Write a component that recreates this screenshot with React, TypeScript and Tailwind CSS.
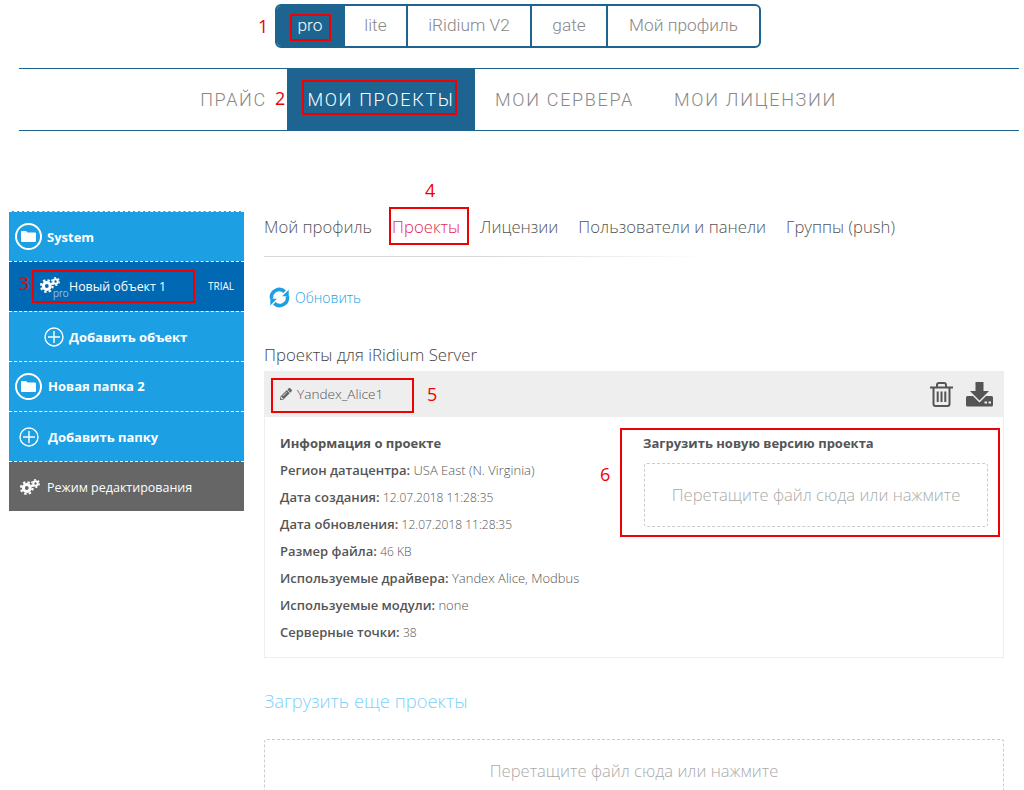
import { FaPencilAlt } from "react-icons/fa";

const openSans = "font-['Open_Sans',sans-serif]";

const productTabs = [
  { label: "pro", width: "w-[68px]", active: true },
  { label: "lite", width: "w-[63px]" },
  { label: "iRidium V2", width: "w-[124px]" },
  { label: "gate", width: "w-[76px]" },
  { label: "Мой профиль", width: "flex-1" },
];

const infoRows = [
  { label: "Регион датацентра:", value: "USA East (N. Virginia)" },
  { label: "Дата создания:", value: "12.07.2018 11:28:35", digits: true },
  { label: "Дата обновления:", value: "12.07.2018 11:28:35", digits: true },
  { label: "Размер файла:", value: "46 KB", digits: true },
  { label: "Используемые драйвера:", value: "Yandex Alice, Modbus" },
  { label: "Используемые модули:", value: "none" },
  { label: "Серверные точки:", value: "38", digits: true },
];

function Mark({ className }: { className: string }) {
  return <div className={`absolute border-2 border-[#f00000] ${className}`} />;
}

function Num({ className, children }: { className: string; children: string }) {
  return (
    <span className={`absolute font-['Open_Sans',sans-serif] text-[18px] font-medium leading-6 text-[#f00000] ${className}`}>
      {children}
    </span>
  );
}

function PlusCircle({ size }: { size: number }) {
  return (
    <svg width={size} height={size} viewBox="0 0 20 20" fill="none" stroke="white" strokeWidth="1.4" className="shrink-0">
      <circle cx="10" cy="10" r="9" />
      <path d="M10 4v12M4 10h12" />
    </svg>
  );
}

function FolderBadge() {
  return (
    <span className="flex h-[27px] w-[27px] shrink-0 items-center justify-center rounded-full border-2 border-white">
      <svg width="15" height="11" viewBox="0 0 15 11" fill="white">
        <path d="M0 1a1 1 0 0 1 1-1h4l1.5 1.5H14a1 1 0 0 1 1 1V10a1 1 0 0 1-1 1H1a1 1 0 0 1-1-1z" />
      </svg>
    </span>
  );
}

function Gears({ className }: { className?: string }) {
  return (
    <svg viewBox="0 0 20 16" fill="none" stroke="white" className={className}>
      <circle cx="6.800" cy="9" r="3.400" strokeWidth="3" />
      <circle cx="6.800" cy="9" r="5.800" strokeWidth="2.200" strokeDasharray="2.400 2.155" />
      <circle cx="15.500" cy="4.500" r="2.200" strokeWidth="2" />
      <circle cx="15.500" cy="4.500" r="3.700" strokeWidth="1.500" strokeDasharray="1.900 1.975" />
    </svg>
  );
}

function RefreshIcon() {
  return (
    <svg width="21" height="21" viewBox="0 0 24 24" className="shrink-0">
      <g fill="none" stroke="#1c9fe3" strokeWidth="4">
        <path d="M3 13.500a9 9 0 0 1 15-8.200" />
        <path d="M21 10.500a9 9 0 0 1-15 8.200" />
      </g>
      <path d="M22.500 3v7.500H15z" fill="#1c9fe3" />
      <path d="M1.500 21v-7.500H9z" fill="#1c9fe3" />
    </svg>
  );
}

function TrashIcon() {
  return (
    <svg width="23" height="25" viewBox="0 0 23 25" fill="none" stroke="#555555" strokeWidth="2">
      <path d="M0 5.500h23" />
      <path d="M7 5.500V3a2 2 0 0 1 2-2h5a2 2 0 0 1 2 2v2.500" />
      <path d="M3.500 5.500V22a2 2 0 0 0 2 2h12a2 2 0 0 0 2-2V5.500" />
      <path d="M7.700 9.500v10.500M11.500 9.500v10.500M15.300 9.500v10.500" />
    </svg>
  );
}

function DownloadIcon() {
  return (
    <svg width="27" height="25" viewBox="0 0 27 25" fill="#555555">
      <path d="M9.500 0h8v9h5.500l-9.500 9.500L4 9h5.500z" />
      <path d="M1.500 14H7l6.500 6.500L20 14h5.500a1.500 1.500 0 0 1 1.500 1.500V23a1.500 1.500 0 0 1-1.500 1.500h-24A1.500 1.500 0 0 1 0 23v-7.500A1.500 1.500 0 0 1 1.500 14z" />
      <path d="M18.500 19.500h2.500v2h-2.500zM22.500 19.500h2.500v2h-2.500z" fill="#eeeeee" />
    </svg>
  );
}

function SideRow({ children, className = "bg-[#1c9fe3]" }: { children: React.ReactNode; className?: string }) {
  return (
    <div className={`flex h-[50px] items-center border-t border-dashed border-white text-[13px] text-white ${className}`}>
      {children}
    </div>
  );
}

function Sidebar() {
  return (
    <aside className={`w-[235px] shrink-0 ${openSans}`}>
      <SideRow>
        <span className="ml-[6px] flex items-center gap-[5px] font-bold">
          <FolderBadge />
          <span className="pt-[2px]">System</span>
        </span>
      </SideRow>
      <SideRow className="bg-[#0168b3]">
        <span className="ml-[31px] flex w-[29px] items-end">
          <Gears className="mb-[3px] w-[20px] shrink-0" />
          <span className="-mb-[3px] -ml-[7px] text-[10px] font-light leading-3 text-white/80">pro</span>
        </span>
        <span className="pt-[1px] text-[12.400px] font-normal">Новый объект 1</span>
        <span className="ml-auto mr-[10px] text-[10px]">TRIAL</span>
      </SideRow>
      <SideRow>
        <span className="ml-[35px] flex items-center gap-[5px] font-bold">
          <PlusCircle size={20} />
          <span className="pt-[2px]">Добавить объект</span>
        </span>
      </SideRow>
      <SideRow>
        <span className="ml-[6px] flex items-center gap-[6px] font-bold">
          <FolderBadge />
          <span className="pt-[1px]">Новая папка 2</span>
        </span>
      </SideRow>
      <SideRow>
        <span className="ml-[10px] flex items-center gap-[9px] font-bold">
          <PlusCircle size={20} />
          <span className="pt-[2px]">Добавить папку</span>
        </span>
      </SideRow>
      <SideRow className="bg-[#666666]">
        <span className="ml-[11px] flex items-center gap-[7px] text-[12.500px]">
          <Gears className="w-[20px]" />
          <span className="pt-[3px]">Режим редактирования</span>
        </span>
      </SideRow>
    </aside>
  );
}

function ProjectCard() {
  return (
    <div className="border border-[#eeeeee]">
      <div className="flex h-[45px] items-center justify-between bg-[#eeeeee] pl-[15px] pr-[10px]">
        <span className="flex items-center gap-[5px] text-[13.600px] font-light text-[#555555]">
          <FaPencilAlt className="text-[12px] text-[#666666]" />
          Yandex_Alice1
        </span>
        <span className="flex items-center gap-[13px]">
          <TrashIcon />
          <DownloadIcon />
        </span>
      </div>
      <div className="flex h-[240px]">
        <div className="w-[378px] pl-[15px] pt-[13px] text-[13px] leading-[27px] text-[#555555]">
          <div className="font-bold">Информация о проекте</div>
          {infoRows.map((row) => (
            <div key={row.label}>
              <span className="font-semibold">{row.label}</span>{" "}
              <span className={`font-light ${row.digits ? "text-[12px]" : ""}`}>{row.value}</span>
            </div>
          ))}
        </div>
        <div className="flex-1 pr-[15px] pt-[13px]">
          <div className="text-[13px] font-bold leading-[27px] text-[#555555]">Загрузить новую версию проекта</div>
          <div className="ml-px mt-[6px] flex h-[64px] items-center justify-center rounded-[3px] border border-dashed border-[#cccccc] text-[16.600px] font-light text-[#aaaaaa]">
            Перетащите файл сюда или нажмите
          </div>
        </div>
      </div>
    </div>
  );
}

export default function App() {
  return (
    <div className="relative h-[790px] overflow-hidden bg-white">
      <div className="flex justify-center pl-[12px] pt-1 font-['Roboto',sans-serif] text-[17.300px] font-light text-[#888888]">
        <div className="flex h-[44px] w-[486px] overflow-hidden rounded-[6px] border-2 border-[#1e6491]">
          {productTabs.map((tab) => (
            <div
              key={tab.label}
              className={`flex items-center justify-center border-r-2 border-[#1e6491] last:border-r-0 ${tab.width} ${
                tab.active ? "bg-[#1e6491] text-white" : ""
              }`}
            >
              {tab.label}
            </div>
          ))}
        </div>
      </div>

      <nav className="ml-[19px] mt-[20px] flex h-[63px] w-[1000px] border-y border-[#1e6491] font-['Roboto',sans-serif] text-[18px] font-light tracking-[1.700px] text-[#888888]">
        <div className="flex w-[268px] items-center justify-end pr-[20px]">ПРАЙС</div>
        <div className="flex w-[188px] items-center justify-center bg-[#1e6491] text-white">МОИ ПРОЕКТЫ</div>
        <div className="flex items-center pl-[20px]">МОИ СЕРВЕРА</div>
        <div className="flex items-center pl-[40px]">МОИ ЛИЦЕНЗИИ</div>
      </nav>

      <div className="mt-[80px] flex pl-[9px]">
        <Sidebar />
        <main className={`ml-[20px] w-[740px] ${openSans}`}>
          <div className="flex h-[46px] items-start gap-[20px] bg-[linear-gradient(90deg,#d8d8d8,#d8d8d8_30%,#ffffff_60%)] bg-[length:100%_1px] bg-bottom bg-no-repeat pt-[4px] text-[16.700px] font-light leading-[24px] text-[#555555]">
            <span>Мой профиль</span>
            <span className="text-[#e8284f]">Проекты</span>
            <span>Лицензии</span>
            <span>Пользователи и панели</span>
            <span>Группы (push)</span>
          </div>
          <div className="ml-[5px] mt-[30px] flex items-center gap-[5px] text-[14px] font-light leading-5 text-[#1c9fe3]">
            <RefreshIcon />
            <span className="pt-[1px]">Обновить</span>
          </div>
          <h2 className="mt-[35px] text-[16.800px] font-light leading-6 text-[#444444]">Проекты для iRidium Server</h2>
          <div className="mt-[4px]">
            <ProjectCard />
          </div>
          <h3 className="mt-[31px] text-[18.400px] font-light leading-6 text-[#7fd0fb]">Загрузить еще проекты</h3>
          <div className="mt-[26px] flex h-[64px] items-center justify-center rounded-t-[3px] border border-b-0 border-dashed border-[#cccccc] text-[16.600px] font-light text-[#aaaaaa]">
            Перетащите файл сюда или нажмите
          </div>
        </main>
      </div>

      <Mark className="left-[290px] top-[14px] h-[27px] w-[41px]" />
      <Mark className="left-[302px] top-[80px] h-[35px] w-[155px]" />
      <Mark className="left-[32px] top-[270px] h-[33px] w-[163px]" />
      <Mark className="left-[389px] top-[207px] h-[38px] w-[80px]" />
      <Mark className="left-[271px] top-[378px] h-[35px] w-[143px]" />
      <Mark className="left-[620px] top-[428px] h-[109px] w-[380px]" />
      <Num className="left-[258px] top-[14px]">1</Num>
      <Num className="left-[275px] top-[86px]">2</Num>
      <Num className="left-[19px] top-[271px]">3</Num>
      <Num className="left-[425px] top-[178px]">4</Num>
      <Num className="left-[427px] top-[382px]">5</Num>
      <Num className="left-[600px] top-[462px]">6</Num>
    </div>
  );
}
